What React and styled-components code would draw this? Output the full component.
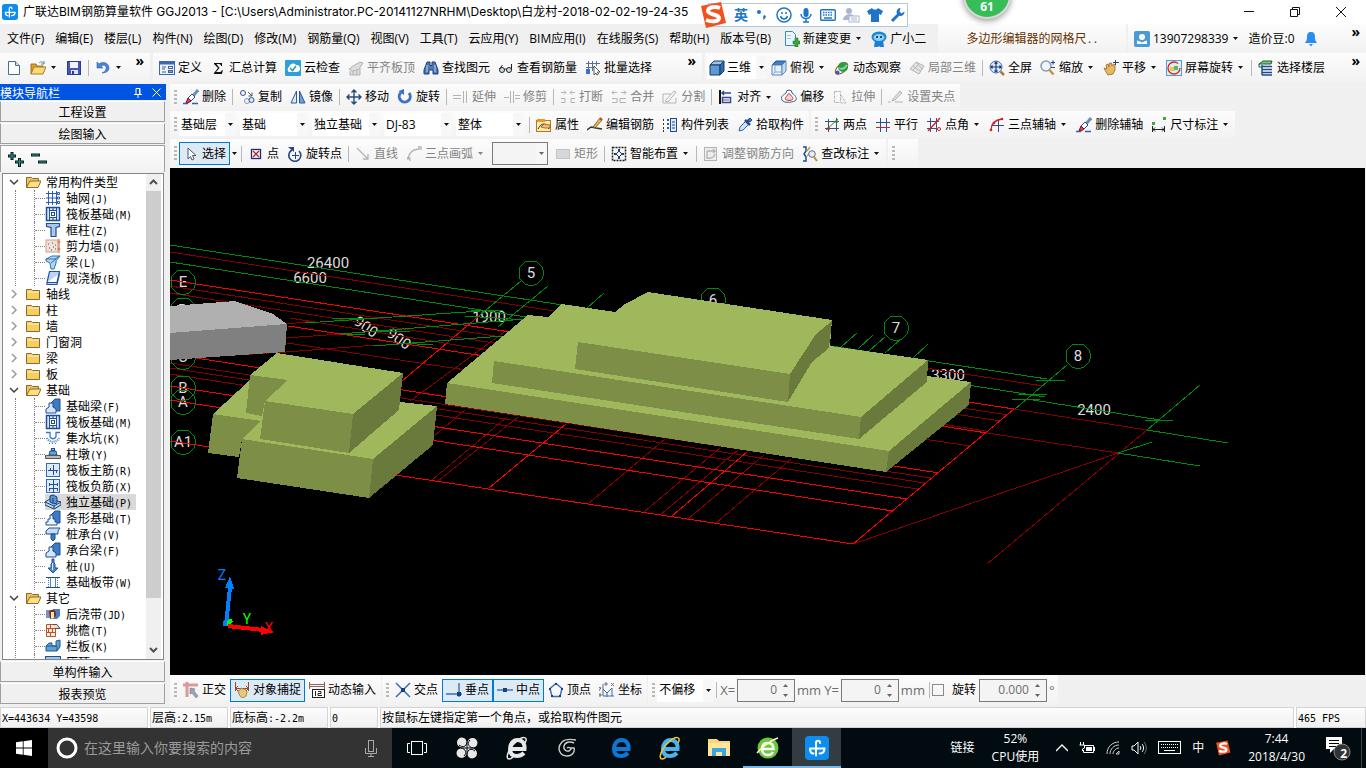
import React, {useState} from 'react';
import styled, {createGlobalStyle} from 'styled-components';

const BLUE = '#1f4e96';
const GREY = '#b4b4b4';

/* 16x16 drawings shared by the toolbars and the tree */
const glyphs = {
  newFile: <><path d="M2.500 1.500h7l4 4v9h-11z" fill="#fbfdff" stroke="#4a6a94"/><path d="M9.500 1.500v4h4" fill="#cfdff0" stroke="#4a6a94"/></>,
  open: <><path d="M1 14V4h5l1 2h6v3" fill="#d9a22c" stroke="#9a7420"/><path d="M1 14l3-7h12l-3 7z" fill="#ffd977" stroke="#a87c20"/><path d="M9 3c2-2 4-1 5 1m0-3v3h-3" fill="none" stroke="#5d8b9c"/></>,
  save: <><rect x="1.500" y="1.500" width="13" height="13" fill="#4956b8" stroke="#2d3a8f"/><rect x="4" y="2" width="8" height="6" fill="#eef2fb"/><rect x="5" y="10" width="7" height="4" fill="#dfe4f4"/><rect x="6" y="11" width="2" height="3" fill="#2d3a8f"/></>,
  undo: <><path d="M2 2v6h6L6 6c3-2 6 0 5 3-.5 2-2 3-4 4 4 0 7-2 7-5 0-5-6-7-10-4z" fill="#4a86d8" stroke="#2b5fae" strokeWidth=".6"/></>,
  define: <><rect x=".5" y="1.500" width="15" height="13" fill="#e9f1fc" stroke="#3c68b0"/><path d="M1 3h14" stroke="#3c68b0" strokeWidth="3"/><path d="M3 7h4M3 9h3M3 12h4" stroke="#44608c"/><rect x="9.500" y="6.500" width="4" height="2" fill="#fff" stroke="#44608c"/><rect x="9.500" y="10.500" width="4" height="2" fill="#7ea4dc" stroke="#44608c"/></>,
  sigma: <path d="M4 3h8v3h-1c0-1-.5-2-2-2H6.500L9.500 8l-3.500 4h4c1 0 1.500-1 2-2h.8L12 14H4v-1l4-5-4-4z" fill="#111"/>,
  cloud: <><rect width="16" height="16" rx="1" fill="#2f9fd8"/><path d="M4 12a3 3 0 0 1 0-5 4 4 0 0 1 7-2 3.500 3.500 0 0 1 1 7z" fill="#fff"/><path d="M5 8l2.500 2.500L11 6" fill="none" stroke="#2f8fc8" strokeWidth="1.500"/></>,
  flatTop: <><path d="M1 9l4-3 7-4 3 1-4 6-6 2zM2 11v4h10V8" fill="#dcdcdc" stroke={GREY}/><path d="M5 11v4M9 10v5" stroke={GREY}/></>,
  find: <><path d="M4 2h3v3l1 1 1-1V2h3l3 8v4h-5v-4H6v4H1v-4z" fill="#4d78b5" stroke="#1d3f78"/><path d="M4 5v7M12 5v7" stroke="#bcd2ee"/></>,
  glasses: <><circle cx="4" cy="10" r="2.500" fill="#cfe0ea" stroke="#222"/><circle cx="11" cy="10" r="2.500" fill="#cfe0ea" stroke="#222"/><path d="M6.500 9h2M1.500 9l3-4M13.500 9V4" fill="none" stroke="#222"/></>,
  batch: <><path d="M1 3.500h14M1 7.500h8M3.500 1v13M7.500 1v10M11.500 1v5" stroke="#5b6f8f" fill="none"/><rect x="1" y="9" width="4" height="5" fill="#3b6fd0"/><path d="M9 6v9l2-2 1 2 1.500-1-1-2H15z" fill="#fff" stroke="#333" strokeWidth=".8"/></>,
  cube: <><path d="M1 5l4-4h10l-4 4z" fill="#9cc4ea" stroke="#173a66"/><path d="M1 5h10v10H1z" fill="#5e9bd6" stroke="#173a66"/><path d="M11 5l4-4v10l-4 4z" fill="#2f6cab" stroke="#173a66"/></>,
  topView: <><path d="M1 5l4-4h10l-4 4z" fill="#3d7fd0" stroke="#27548e"/><path d="M1 5h10v10H1z" fill="#e6f1fb" stroke="#5c86b6"/><path d="M11 5l4-4v10l-4 4z" fill="#c6dcf1" stroke="#5c86b6"/><path d="M4 5v7h7M4 12l-3 3" fill="none" stroke="#84a8cf"/></>,
  orbit: <><ellipse cx="7.500" cy="8.500" rx="7.500" ry="4" transform="rotate(-40 7.500 8.500)" fill="none" stroke="#b04a20"/><circle cx="9" cy="7" r="5" fill="#2f9b4a"/><path d="M5 8c3 2 6 0 8-3" stroke="#8fdca0" fill="none" strokeWidth="1.500"/><circle cx="3.500" cy="12.500" r="2" fill="#2c66c4"/></>,
  partView: <><path d="M1 9l6-7 8 4-5 8z" fill="#e4e4e4" stroke={GREY}/><path d="M4 6l7 5M10 4l-6 6M8 3l5 6" stroke={GREY} fill="none"/></>,
  fit: <><circle cx="7" cy="7" r="6" fill="#d8e8f8" stroke="#4a6c9c"/><path d="M7 2v10M2 7h10M5.500 3.500L7 2l1.500 1.500M5.500 10.500L7 12l1.500-1.500M3.500 5.500L2 7l1.500 1.500M10.500 5.500L12 7l-1.500 1.500" fill="none" stroke="#1d3f88" strokeWidth="1.200"/><path d="M11.500 11.500l3.500 3.500" stroke="#b87830" strokeWidth="2.500"/></>,
  zoomTool: <><circle cx="6" cy="6" r="5" fill="#eef5fb" stroke="#8a9bb0" strokeWidth="1.500"/><path d="M9.500 10l4 4.500" stroke="#c89238" strokeWidth="2.500"/><path d="M11 2.500h4M13 .5v4M11 7.500h4" stroke="#1d4a90" strokeWidth="1.200"/></>,
  pan: <><path d="M1 8l3 1-1-4 2-1 1 3 .5-4h2L9 6l1.500-2 1.500 1v5l-2 4-5 1-2-3z" fill="#e9b862" stroke="#8d6b2c" strokeWidth=".8"/><path d="M10 2.500h6M12.500 0v5" stroke="#2b4a7c"/></>,
  screenRotate: <><rect x=".5" y=".5" width="15" height="15" fill="#d8eef8" stroke="#4c9fd0"/><circle cx="8" cy="8" r="6" fill="none" stroke="#d22" strokeWidth="1.300" strokeDasharray="32 6"/><rect x="4" y="7" width="5" height="4" fill="#f0c83c"/><rect x="8" y="6" width="4" height="4" fill="#5cb85c"/></>,
  floors: <><path d="M1 4l4-3h9l-1 3z" fill="#7cc47c" stroke="#205c38"/><path d="M4 5v10M4 6.500h10M4 9.500h10M4 12.500h10M4 15h10" stroke="#1c4a8c" strokeWidth="1.400"/><path d="M1 4v3h3" fill="none" stroke="#205c38"/></>,
  erase: <><path d="M15 1l-5 6" stroke="#6d8fb4" strokeWidth="3"/><path d="M9 5l3 3-4 4-3-3z" fill="#fff" stroke="#2d4b84"/><path d="M5 9l3 3-3 2H3z" fill="#e14a3c" stroke="#802"/><path d="M0 14.500h5M9 14.500h6" stroke="#2f62a8" strokeWidth="1.500"/></>,
  copy: <><circle cx="4" cy="4" r="2.500" fill="#eef4fb" stroke="#33568f"/><circle cx="8" cy="12" r="2.500" fill="#eef4fb" stroke="#8b98ac"/><circle cx="12.500" cy="11" r="2.500" fill="#dde8f4" stroke="#33568f"/><path d="M9 3l4 4M13 3.500V7h-3.500" stroke="#555" fill="none"/></>,
  mirror: <><path d="M6.500 2v12H1z" fill="#dfeaf8" stroke="#2c5aa0"/><path d="M9.500 2v12H15z" fill="#6f9bd8" stroke="#2c5aa0"/></>,
  move: <path d="M8 1v14M1 8h14M5.500 3.500L8 1l2.500 2.500M5.500 12.500L8 15l2.500-2.500M3.500 5.500L1 8l2.500 2.500M12.500 5.500L15 8l-2.500 2.500" fill="none" stroke="#24497c" strokeWidth="1.400"/>,
  rotate: <><path d="M4 3.500A5.500 5.500 0 1 0 12 4" fill="none" stroke="#3d72c8" strokeWidth="3"/><path d="M7 0v6L1.500 2z" fill="#3d72c8"/></>,
  extend: <path d="M0 6.500h8M0 9.500h8M10.500 2v12M13.500 2v12" fill="none" stroke={GREY}/>,
  trim: <path d="M0 8.500h5M11 6.500h5M11 9.500h5M6.500 2v12M9.500 2v12" fill="none" stroke={GREY}/>,
  breakIt: <path d="M1 3.500h5M10 3.500h5M4 1.500l2 2-2 2M12 1.500l-2 2 2 2M1 9.500h4v4H1M15 9.500h-4v4h4" fill="none" stroke={GREY}/>,
  merge: <path d="M1 3.500h5M10 3.500h5M3 1.500l-2 2 2 2M13 1.500l2 2-2 2M1 9.500h5v4H1M15 9.500H9v4h6" fill="none" stroke={GREY}/>,
  split: <path d="M1 5h8M1 5v9h13V9M3 12l9-10 2 1-8 10z" fill="none" stroke={GREY}/>,
  align: <><path d="M2 1v14" stroke="#111" strokeWidth="2"/><path d="M4 4h9M6 2L4 4l2 2" stroke="#2a4b9c" fill="none" strokeWidth="1.500"/><rect x="4.500" y="8.500" width="8" height="5" fill="#fff" stroke="#2a4b9c" strokeWidth="1.500"/><path d="M5 11h6" stroke="#b33"/></>,
  offset: <><path d="M5 4a3 3 0 0 1 6 0c3 2 5 5 4 7s-12 4-14 0 2-5 4-7z" fill="#fff" stroke="#345a94"/><path d="M6.500 6c1-2 2-2 3 0 2 2 3 3 2 4.500s-6 1-7 0S5 8 6.500 6z" fill="#f6d0cc" stroke="#c43c30"/></>,
  stretch: <path d="M2.500 2.500h6v11h-1M2.500 2.500v11h5M9 6l5 8H9" fill="none" stroke={GREY} strokeDasharray="3 1"/>,
  grips: <><path d="M0 13h3M7 13h8" stroke={GREY}/><path d="M5 10l7-8 2 2-7 7-3 1z" fill="#ddd" stroke={GREY}/></>,
  props: <><rect x=".5" y="3.500" width="14" height="11" fill="#ffe9b0" stroke="#b97812"/><path d="M1 2h8v3H1z" fill="#e89a28"/><path d="M2 12c3-5 5-6 8-4l3 4" fill="none" stroke="#333"/><path d="M5 10l3-3 6 1v3H9z" fill="#f2bd78" stroke="#7a4a14" strokeWidth=".7"/></>,
  editBar: <><path d="M0 13l4-3 5 1 6 1" stroke="#333" fill="none" strokeWidth="1.500"/><path d="M6 10l7-9 2 2-7 8z" fill="#e8c34c" stroke="#5c4210" strokeWidth=".8"/><path d="M13 1l2 2" stroke="#c33" strokeWidth="2"/></>,
  list: <><path d="M1 3h2M1 7h2M1 11h2M1 14h2" stroke="#333" strokeDasharray="1 1" strokeWidth="2"/><path d="M5 3h2M5 7h2M5 11h2" stroke="#2c5aa8" strokeWidth="2"/><rect x="8.500" y="1.500" width="6" height="13" fill="#dbe9f8" stroke="#234a86"/><path d="M10 5h3M10 8h3M10 11h3" stroke="#234a86"/></>,
  picker: <><path d="M2 14l1-4 6-6 3 3-6 6z" fill="#cfe4f6" stroke="#2f66a8"/><path d="M8 3l5 5M10 5l3-3" stroke="#1f4c8c" strokeWidth="2.500"/><path d="M11 3l2-2 2 2-2 2z" fill="#3f86d0" stroke="#1f4c8c"/></>,
  twoPoint: <><path d="M4.500 2v13M12.500 1v13M1 4.500h14M1 11.500h14" stroke="#39508c" fill="none"/><path d="M2 13L14 2" stroke="#2a8a2a"/><circle cx="4.500" cy="11.500" r="1.500" fill="#c22"/><circle cx="12.500" cy="4.500" r="1.500" fill="#2a8a2a"/></>,
  parallel: <><path d="M5.500 1v14M11.500 1v14M1 5.500h14" stroke="#2c4f94"/><path d="M1 10.500h14" stroke="#c22"/></>,
  pointAngle: <><path d="M4.500 1v14M10.500 1v14M1 4.500h12M1 11.500h10" stroke="#39508c"/><path d="M2 14L14 1" stroke="#c22" strokeWidth="1.300"/><circle cx="13" cy="12" r="1.500" fill="none" stroke="#c22"/></>,
  threeAxis: <><path d="M9.500 2v13M3 8.500h12" stroke="#2c4f94"/><path d="M2 13c0-7 4-10 11-11" fill="none" stroke="#c22" strokeWidth="1.300"/><circle cx="2" cy="13" r="1.300" fill="#c22"/><circle cx="13" cy="2" r="1.300" fill="#c22"/><circle cx="5" cy="6" r="1.300" fill="#c22"/></>,
  dimension: <><path d="M1.500 9v6M13.500 9v6M2 12.500h11M4 10.500l-2 2 2 2M11 10.500l2 2-2 2" fill="none" stroke="#222"/><path d="M1 5h3v3H1zM12 0h3v3h-3z" fill="#3aa84a"/></>,
  cursor: <path d="M5 2v11l2.500-2.500L9 14l2-1-1.500-3.500H13z" fill="#fff" stroke="#556" />,
  point: <><rect x="3.500" y="3.500" width="9" height="9" fill="#fff" stroke="#1a2a7a" strokeWidth="1.300"/><path d="M5 5l6 6M11 5l-6 6" stroke="#b22" strokeWidth="1.300"/></>,
  rotPoint: <><path d="M5 4a6 6 0 1 0 7 1" fill="none" stroke="#24497c" strokeWidth="1.600"/><path d="M8.500 6v7M5 9.500h7" stroke="#24497c"/><path d="M1 1h6v5z" fill="#24497c"/></>,
  line: <path d="M2 2l11 11M13 8v5H8" fill="none" stroke={GREY} strokeWidth="1.300"/>,
  arc: <path d="M2 14C2 8 6 3 14 3M1 12h3v3M12 1h3v3" fill="none" stroke={GREY} strokeWidth="1.300"/>,
  rect: <rect x="1.500" y="3.500" width="13" height="9" fill="#d8d8d8" stroke="#c4c4c4"/>,
  smart: <><rect x="1.500" y="1.500" width="13" height="13" fill="none" stroke="#222" strokeDasharray="2 1" strokeWidth="1.500"/><path d="M8 3v3M8 10v3M3 8h3M10 8h3" stroke="#1b3f86" strokeWidth="2"/><path d="M6 6h1v1H6zM9 9h1v1H9zM9 6h1v1H9zM6 9h1v1H6z" fill="#222"/></>,
  barDir: <><rect x="1.500" y="1.500" width="12" height="13" fill="#eee" stroke={GREY}/><path d="M4 5h8M4 5v7c4 1 7-1 8-4M10 3l2 2-2 2" fill="none" stroke={GREY} strokeWidth="1.400"/></>,
  checkMark: <><path d="M1 1h3v4l-2 3 2 3v4H1" fill="none" stroke="#1f4e96" strokeWidth="1.500"/><path d="M5 5l3-4M5 10l2-2" stroke="#c7a03a" strokeWidth="1.500"/><circle cx="10" cy="8" r="3.300" fill="#e6f0f8" stroke="#55708f"/><path d="M12 11l3 4" stroke="#c98a2c" strokeWidth="2"/></>,
  ortho: <><path d="M0 3h15M4 0v15" stroke="#d99a98" strokeWidth="3"/><path d="M7 6v6l2-1 4 5 2-2-4-5 1-2z" fill="#98a5b5" stroke="#6d7a8b" strokeWidth=".6"/></>,
  snap: <><path d="M1.500 0v9M14.500 0v9M1 6.500h14M4 4L1.500 6.500 4 9M12 4l2.500 2.500L12 9" stroke="#a5403a" fill="none"/><path d="M4 9l2-1 1-2 2 1 2 0 2 3-1 4c-2 2-5 2-6 0z" fill="#e7c77b" stroke="#a8853a"/></>,
  dynInput: <><path d="M.5 0v7M15.500 0v7M0 2.500h16M0 4.500h16" stroke="#8a6460"/><rect x="3.500" y="7.500" width="12" height="8" fill="#fff" stroke="#222"/><path d="M6.500 9v5M9 9.500h3v2H9v2h4" stroke="#222" fill="none"/></>,
  cross: <><path d="M1 1l14 14M15 1L1 15" stroke="#3a6db8" strokeWidth="1.500"/><rect x="6" y="6" width="4" height="4" fill="#173f88"/></>,
  perp: <><path d="M0 12h16M13 1v14" stroke="#3a6db8" strokeWidth="1.400"/><rect x="11" y="10" width="4" height="4" fill="#173f88"/></>,
  mid: <><path d="M0 8h16" stroke="#3a6db8" strokeWidth="1.400"/><rect x="6" y="6" width="4" height="4" fill="#173f88"/></>,
  vertex: <><path d="M8 1.500l6 5-2 8H4l-2-8z" fill="none" stroke="#3a6db8" strokeWidth="1.400"/><path d="M7 1h2v2H7zM1 6h2v2H1zM13 6h2v2h-2zM3 13h2v2H3zM11 13h2v2h-2z" fill="#173f88"/></>,
  coord: <><path d="M4 2v12h11M4 7l4 4 5-5M8 11v4M13 6v8" fill="none" stroke="#3a6db8"/><path d="M0 5l2 2M2 5l-2 4M12 1l3 3M15 1l-3 3M0 12h2v2H0zM6 1h2v2H6z" stroke="#555" fill="none" strokeWidth=".8"/></>,
  newChange: <><path d="M1.500 .500h7l3 3v11h-10z" fill="#eaf6fd" stroke="#3c8ab8"/><path d="M3 4.500h4M3 7.500h4" stroke="#9cc8e2"/><path d="M11 7h3v3h2v3h-2v3h-3v-3H9v-3h2z" fill="#3aa63a" stroke="#1d701d" strokeWidth=".5"/></>,
  mascot: <><ellipse cx="8" cy="6" rx="7.500" ry="5.500" fill="#1b86d8"/><path d="M4 9h8l1 7H9l-1-1-1 1H3z" fill="#1b7fd4"/><ellipse cx="8" cy="6.500" rx="5.500" ry="3.500" fill="#8ed0f8"/><circle cx="6" cy="6" r="1" fill="#124"/><circle cx="10" cy="6" r="1" fill="#124"/></>,
  user: <><rect width="16" height="16" rx="2" fill="#4a9ad4"/><circle cx="8" cy="6" r="3" fill="#fff"/><path d="M3 13V9.500l3 1 2 1 2-1 3-1V13z" fill="#fff"/></>,
  bell: <><path d="M8 1c3 0 4 2 4 5 0 4 1 4 2 6H2c1-2 2-2 2-6 0-3 1-5 4-5z" fill="#2b8cf0"/><path d="M6 13h4l-2 2.500z" fill="#2b8cf0"/></>,
  folder: <><path d="M1.500 13.500v-10h5l1 1h7v9z" fill="#f6cf62" stroke="#8a6a24"/><path d="M2 6h12" stroke="#fff2c0"/></>,
  folderOpen: <><path d="M1.500 13.500v-10h5l1 1h6v3" fill="#f0c454" stroke="#8a6a24"/><path d="M1.500 13.500L5 7h11l-3 6.500z" fill="#fce08c" stroke="#8a6a24"/></>,
  axisNet: <><path d="M3.500 1v14M7.500 1v14M1 3.500h11M1 8h11M1 12.500h11" stroke="#2c5fb4" fill="none"/><path d="M11.500 1v14" stroke="#2c5fb4"/><path d="M12.500 2.500h2v2h-2zM12.500 7h2v2h-2zM12.500 11.500h2v2h-2z" fill="#fff" stroke="#2c5fb4"/></>,
  raft: <><rect x="1.500" y="1.500" width="13" height="13" fill="#dbe8f6" stroke={BLUE} strokeWidth="1.500"/><rect x="4.500" y="4.500" width="7" height="7" fill="#fff" stroke={BLUE}/><path d="M6.500 6v4M9.500 6v4M6 6.500h4M6 9.500h4M4.500 2v2M8 2v2M11.500 2v2M4.500 12v2M8 12v2M11.500 12v2" stroke={BLUE}/></>,
  column: <path d="M1.500 1.500h13v3l-3.500 1v9H6v-9l-4.500-1z" fill="#a9c8ec" stroke={BLUE} strokeWidth="1.200"/>,
  shearWall: <><rect x="1" y="2" width="12" height="12" fill="#efe2da" stroke="#d8a080"/><path d="M3 6h1M7 5h1M10 7h1M4 10h1M8 9h1M6 12h1M10 11h1" stroke="#555"/><path d="M14 1v14M12.500 4h3M12.500 11h3" stroke="#c8642c"/></>,
  beam: <><path d="M1 5l6-3h8l-4 5v2l-2 6H6L5 9 1 7z" fill="#b5d6f2" stroke="#2a72b8"/><path d="M1 5h9l5-3M6 9l5-4" fill="none" stroke="#2a72b8"/></>,
  slab: <path d="M4.500 1.500h10L12 12.500H2z M2 12.500v2h10l2.500-11" fill="#b9d4f4" stroke="#22569e" strokeWidth="1.200"/>,
  footBeam: <><path d="M6 5l4-4h5v12h-4z" fill="#3d7cc4" stroke={BLUE}/><path d="M1 15v-4l3-2V5h4v4l3 2v4z" fill="#d6e6f8" stroke={BLUE}/></>,
  pit: <><path d="M1 2.500h4v4c1 3 5 3 6 0v-4h4" fill="none" stroke="#3a76c0" strokeWidth="1.300"/><path d="M2 8c2 5 10 5 12 0" fill="none" stroke="#3a76c0" strokeDasharray="1 1" strokeWidth="2"/><path d="M4 13.500h8" stroke="#3a76c0" strokeDasharray="1 2"/></>,
  pier: <><path d="M4 9l1-4h6l1 4z" fill="#6fa0dc" stroke={BLUE}/><rect x="6.500" y="2.500" width="3" height="2" fill="#8db4e2" stroke={BLUE}/><path d="M.5 9.500h15v3H.5z" fill="#bcbcbc" stroke="#555"/></>,
  mainBar: <><rect x="1.500" y="1.500" width="13" height="13" fill="#dceafa" stroke="#3468b8"/><path d="M8.500 3v10M3 8.500h10M5.500 6v3M11.500 8v3" stroke={BLUE}/></>,
  negBar: <><rect x="1.500" y="1.500" width="13" height="13" fill="#dceafa" stroke="#3468b8"/><path d="M8.500 1v14M4 6.500h9M4 10.500h9M4.500 5v3M12.500 5v3M4.500 10v3M12.500 10v3" stroke={BLUE}/></>,
  isoFoot: <><path d="M0 8l5-3 11 3v3l-7 4-9-4z" fill="#bcd6f0" stroke="#14406f"/><path d="M5 2l3-1 4 2v6l-3 1-4-2z" fill="#5b94cf" stroke="#14406f"/><path d="M0 8l9 4v3M9 12l7-4M8 4v5" fill="none" stroke="#14406f"/></>,
  stripFoot: <><path d="M6 5l4-4h5v12h-4z" fill="#3d7cc4" stroke={BLUE}/><path d="M1 15v-3h2V9h2V5h3v4h2v3h2v3z" fill="#eaf2fb" stroke={BLUE}/></>,
  pileCap: <><path d="M1 5l3-3h11l-2 3v3H1z" fill="#c8def4" stroke={BLUE}/><path d="M6 8h4v5l-2 2-2-2z" fill="#3d7cc4" stroke={BLUE}/></>,
  pile: <><path d="M7 1h2v4l1 1v4h3l-5 5-5-5h3V6l1-1z" fill="#4d8ad0" stroke={BLUE}/><path d="M7.500 5v7" stroke="#dcecff"/></>,
  band: <><path d="M1 3.500h14M1 13.500h14" stroke={BLUE}/><path d="M3.500 4v9M12.500 4v9" stroke="#4c84cc" strokeDasharray="1 1"/><path d="M5.500 4v9M10.500 4v9" stroke="#4c84cc"/></>,
  postCast: <><path d="M1 4h6v8H1z" fill="#7d94b8"/><path d="M8 3h7v7l-3 3H8z" fill="#4f7ec0"/><path d="M4 5c5-3 7 0 7 3s-2 4-6 5z" fill="#733414"/><path d="M6 6h3v6H6z" fill="#f2e0c8"/></>,
  eave: <><path d="M1.500 2.500h9v12h-9z" fill="#fbe8d8" stroke="#b5552a"/><path d="M2 6.500h8M2 10.500h8M5.500 3v3M3.500 7v3M7.500 7v3M5.500 11v3" stroke="#b5552a"/><path d="M8 2.500h4l3 4h-5" fill="#ddd" stroke="#6b4a3a"/></>,
  rail: <><path d="M1 8l3-3h3v3h4V3l4-1v7l-3 4H1z" fill="#5f9fd6" stroke="#1f5a94"/><path d="M1 8h11v5" fill="none" stroke="#1f5a94"/></>,
  coping: <rect x=".5" y="2.500" width="15" height="10" fill="#9cc4ec" stroke={BLUE}/>,
};

const Icon = ({name, size = 16}) => (
  <svg width={size} height={size} viewBox="0 0 16 16" aria-hidden="true">{glyphs[name]}</svg>
);

const Caret = ({color = '#111'}) => (
  <svg width="5" height="3" viewBox="0 0 5 3" aria-hidden="true"><path d="M0 0h5L2.500 3z" fill={color}/></svg>
);

/* latin runs of the bitmap font sit in a half-width cell */
const Mixed = ({children}) => children.split(/([\x20-\x7e]+)/).filter(Boolean).map((run, i) => (
  /^[\x20-\x7e]/.test(run) ? <Half key={i}>{run}</Half> : <span key={i}>{run}</span>
));

const Tools = ({items}) => items.map((item, i) => {
  if (item === '|') return <Divider key={i} />;
  const [icon, label, opts = {}] = item;
  return (
    <Tool key={i} type="button" $on={opts.on} disabled={opts.off} aria-label={label || icon}>
      <Icon name={icon} />
      {label && <span>{label}</span>}
      {opts.more && <Drop><Caret color={opts.off ? '#888' : '#111'} /></Drop>}
    </Tool>
  );
});

const Combo = ({label, value, icon, width}) => (
  <ComboBox $width={width}>
    {icon && <Icon name={icon} />}
    <select aria-label={label}><option>{value}</option></select>
    <ComboArrow><Caret /></ComboArrow>
  </ComboBox>
);

const Spin = ({label, value, width}) => (
  <SpinBox $width={width}>
    <input type="text" aria-label={label} defaultValue={value} disabled />
    <SpinArrows>
      <svg width="5" height="3" viewBox="0 0 5 3"><path d="M0 3h5L2.500 0z" fill="#666"/></svg>
      <Caret color="#666" />
    </SpinArrows>
  </SpinBox>
);

const menus = ['文件(F)', '编辑(E)', '楼层(L)', '构件(N)', '绘图(D)', '修改(M)', '钢筋量(Q)', '视图(V)',
  '工具(T)', '云应用(Y)', 'BIM应用(I)', '在线服务(S)', '帮助(H)', '版本号(B)'];

const mainTools = [['define', '定义'], ['sigma', '汇总计算'], ['cloud', '云检查'], ['flatTop', '平齐板顶', {off: true}],
  ['find', '查找图元'], ['glasses', '查看钢筋量'], ['batch', '批量选择']];

const viewTools = [['topView', '俯视', {more: true}], ['orbit', '动态观察'], ['partView', '局部三维', {off: true}], '|',
  ['fit', '全屏'], ['zoomTool', '缩放', {more: true}], ['pan', '平移', {more: true}],
  ['screenRotate', '屏幕旋转', {more: true}], '|', ['floors', '选择楼层']];

const editTools = [['erase', '删除'], '|', ['copy', '复制'], ['mirror', '镜像'], '|', ['move', '移动'], ['rotate', '旋转'], '|',
  ['extend', '延伸', {off: true}], ['trim', '修剪', {off: true}], '|', ['breakIt', '打断', {off: true}],
  ['merge', '合并', {off: true}], ['split', '分割', {off: true}], '|', ['align', '对齐', {more: true}], ['offset', '偏移'],
  ['stretch', '拉伸', {off: true}], '|', ['grips', '设置夹点', {off: true}]];

const partTools = ['|', ['props', '属性'], ['editBar', '编辑钢筋'], ['list', '构件列表'], ['picker', '拾取构件']];

const axisTools = [['twoPoint', '两点'], ['parallel', '平行'], ['pointAngle', '点角', {more: true}],
  ['threeAxis', '三点辅轴', {more: true}], ['erase', '删除辅轴'], ['dimension', '尺寸标注', {more: true}]];

const drawTools = ['|', ['point', '点'], ['rotPoint', '旋转点'], '|', ['line', '直线', {off: true}],
  ['arc', '三点画弧', {off: true, more: true}]];

const layoutTools = [['rect', '矩形', {off: true}], '|', ['smart', '智能布置', {more: true}], '|',
  ['barDir', '调整钢筋方向', {off: true}], ['checkMark', '查改标注', {more: true}]];

const tree = [
  {name: '常用构件类型', open: true, kids: [['axisNet', '轴网(J)'], ['raft', '筏板基础(M)'], ['column', '框柱(Z)'],
    ['shearWall', '剪力墙(Q)'], ['beam', '梁(L)'], ['slab', '现浇板(B)']]},
  {name: '轴线'}, {name: '柱'}, {name: '墙'}, {name: '门窗洞'}, {name: '梁'}, {name: '板'},
  {name: '基础', open: true, kids: [['footBeam', '基础梁(F)'], ['raft', '筏板基础(M)'], ['pit', '集水坑(K)'],
    ['pier', '柱墩(Y)'], ['mainBar', '筏板主筋(R)'], ['negBar', '筏板负筋(X)'], ['isoFoot', '独立基础(P)'],
    ['stripFoot', '条形基础(T)'], ['pileCap', '桩承台(V)'], ['footBeam', '承台梁(F)'], ['pile', '桩(U)'],
    ['band', '基础板带(W)']]},
  {name: '其它', open: true, kids: [['postCast', '后浇带(JD)'], ['eave', '挑檐(T)'], ['rail', '栏板(K)'], ['coping', '压顶(YD)']]},
];

/* model space: x1 y1 x2 y2 */
const darkLines = [
  [170, 252, 1043, 386], [170, 286, 1008, 415], [170, 293, 1000, 421], [290, 318, 985, 431], [287, 343, 970, 446],
  [286, 324, 315, 321], [286, 338, 340, 334], [286, 352, 376, 345], [170, 359, 286, 352],
  [170, 363, 931, 478], [170, 368, 925, 483], [170, 374, 917, 489],
  [1014, 409, 1147, 430], [987, 433, 1118, 453], [853, 544, 1118, 453], [987, 564, 1147, 430],
  [507, 330, 410, 401], [465, 410, 402, 463], [507, 417, 432, 480], [518, 417, 438, 481],
  [665, 439, 588, 504], [720, 448, 644, 512], [738, 450, 660, 515], [764, 455, 688, 519], [791, 459, 716, 523],
];
const redLines = [
  [170, 280, 1014, 409], [288, 326, 987, 433], [170, 354, 939, 473], [170, 386, 907, 499], [170, 400, 893, 511],
  [170, 441, 853, 544], [853, 544, 1014, 409], [480, 315, 402, 381], [566, 424, 489, 488], [747, 452, 672, 516],
];
const greenLines = [
  [170, 245, 1047, 379], [170, 262, 1045, 397], [1033, 400, 1160, 420], [1147, 430, 1228, 443], [1118, 453, 1200, 466],
  [1118, 453, 1152, 442], [1147, 430, 1200, 385], [1067, 365, 1015, 409], [1036, 380, 1065, 380], [1018, 394, 1047, 394],
  [1012, 399, 1040, 399], [1145, 420, 1173, 420], [305, 323, 495, 310], [340, 334, 525, 319], [373, 346, 503, 336],
  [521, 281, 480, 315], [548, 286, 498, 327], [471, 310, 503, 311], [465, 316, 526, 320], [331, 318, 377, 319],
  [375, 331, 410, 332], [400, 343, 433, 345], [345, 334, 365, 334],
  [604, 293, 587, 308], [857, 333, 841, 347], [873, 335, 858, 349], [885, 337, 869, 351], [901, 339, 885, 353], [928, 344, 913, 358],
];
const axisMarks = [['E', 183, 282], ['D', 183, 310], ['C', 183, 357], ['B', 183, 388], ['A', 183, 402], ['A1', 183, 442],
  ['5', 531, 273], ['6', 713, 300], ['7', 896, 328], ['8', 1078, 356]];

const ring = (cx, cy) => Array.from({length: 12}, (_, i) => {
  const a = i * Math.PI / 6;
  return `${Math.round(cx + 12.5 * Math.sin(a))},${Math.round(cy + 12.5 * Math.cos(a))}`;
}).join(' ');

const Lines = ({rows, color}) => (
  <g stroke={color} shapeRendering="crispEdges">
    {rows.map(([x1, y1, x2, y2], i) => <line key={i} x1={x1} y1={y1} x2={x2} y2={y2} />)}
  </g>
);

const Scene = () => (
  <SceneSvg viewBox="170 168 1195 507" role="img" aria-label="三维模型">
    <g fill="#dcdcdc" fontSize="15" textAnchor="middle">
      <text x="328" y="268">26400</text>
      <text x="310" y="283">6600</text>
      <text x="489" y="322">1900</text>
      <text transform="translate(363 331) rotate(35)">900</text>
      <text transform="translate(396 343) rotate(35)">900</text>
      <text x="948" y="380">3300</text>
      <text x="1094" y="415">2400</text>
      {axisMarks.map(([t, x, y]) => <text key={t} x={x} y={y + 5}>{t}</text>)}
    </g>
    <Lines rows={darkLines} color="#870000" />
    <Lines rows={redLines} color="#ff0000" />
    <g fill="none" stroke="#008a10" shapeRendering="crispEdges">
      {axisMarks.map(([t, x, y]) => <polygon key={t} points={ring(x, y)} />)}
    </g>
    <Lines rows={greenLines} color="#008a10" />
    <g shapeRendering="crispEdges">
      <path d="M170 306L235 301 273 314 287 324 170 333z" fill="#b0b0b0"/>
      <path d="M170 333L287 324 285 352 170 360z" fill="#808080"/>
      <g fill="#a0b85c">
        <path d="M447 383L528 315 548 317 562 304 615 312 625 304 648 292 832 320 830 346 928 360 927 376 971 382 889 451z"/>
        <path d="M213 414L250 380 400 402 437 406 373 459 242 439 261 421z"/>
        <path d="M250 375L277 353 403 373 353 414 265 401 288 380z"/>
      </g>
      <g fill="#7d8f47">
        <path d="M447 383L889 451 886 472 445 404z"/>
        <path d="M494 361L861 417 859 439 492 383z"/>
        <path d="M578 342L790 374 788 402 575 369z"/>
        <path d="M213 414L261 421 242 439 239 457 208 453z"/>
        <path d="M242 439L373 459 369 498 237 478z"/>
        <path d="M250 375L288 380 265 401 262 416 246 413z"/>
        <path d="M265 401L353 414 349 453 260 439z"/>
      </g>
      <g fill="#6a7a3c">
        <path d="M889 451L971 382 969 405 886 472z"/>
        <path d="M861 417L928 360 927 382 859 439z"/>
        <path d="M832 321L829 348 812 362 788 402 790 374 816 334z"/>
        <path d="M373 459L437 406 433 445 369 498z"/>
        <path d="M353 414L403 373 399 410 349 453z"/>
      </g>
      <path d="M226 625L230 587" stroke="#0080ff" strokeWidth="4"/>
      <path d="M230 576L234 589 225 588z" fill="#0080ff"/>
      <path d="M226 625L232 620" stroke="#00ff00" strokeWidth="4"/>
      <path d="M228 626L263 630" stroke="#ff0000" strokeWidth="4"/>
      <path d="M261 626L274 632 261 635z" fill="#ff0000"/>
      <path d="M223 621h4v5h-4z" fill="#0080ff"/>
    </g>
    <g fontSize="14" textAnchor="middle">
      <text x="222" y="580" fill="#0080ff">Z</text>
      <text x="247" y="624" fill="#00ff00">Y</text>
      <text x="269" y="633" fill="#ff0000">X</text>
    </g>
  </SceneSvg>
);

const App = () => {
  const [picked, setPicked] = useState('独立基础(P)');

  return (
    <Desktop>
      <GlobalStyle />
      <TitleBar>
        <BrandMark size={16} />
        <Title>广联达BIM钢筋算量软件 GGJ2013 - [C:\Users\Administrator.PC-20141127NRHM\Desktop\白龙村-2018-02-02-19-24-35</Title>
        <WinButtons>
          <button type="button" aria-label="最小化"><svg width="12" height="12"><path d="M1 5.500h10" stroke="#111"/></svg></button>
          <button type="button" aria-label="还原"><svg width="12" height="12" fill="none" stroke="#111"><path d="M1.500 3.500h7v7h-7zM3.500 3V1.500h7v7H9"/></svg></button>
          <button type="button" aria-label="关闭"><svg width="12" height="12"><path d="M1 1l10 10M11 1L1 11" stroke="#111"/></svg></button>
        </WinButtons>
      </TitleBar>

      <ImeBar>
        <SogouMark size={28} />
        <b>英</b>
        <svg width="14" height="16" viewBox="0 0 14 16"><circle cx="4" cy="5" r="2" fill="#1f74c8"/><path d="M9 8c3 0 2 4-1 5 1-2 0-2 0-3z" fill="#1f74c8"/></svg>
        <svg width="16" height="16" viewBox="0 0 16 16" fill="none" stroke="#1f74c8" strokeWidth="1.500"><circle cx="8" cy="8" r="7"/><path d="M4.500 9c1 4 6 4 7 0M6 5v2M10 5v2"/></svg>
        <svg width="14" height="16" viewBox="0 0 14 16"><rect x="4.500" y="1" width="5" height="9" rx="2.500" fill="#1f74c8"/><path d="M2 7c0 6 10 6 10 0M7 12v3M4 15h6" fill="none" stroke="#1f74c8" strokeWidth="1.500"/></svg>
        <svg width="16" height="12" viewBox="0 0 16 12"><rect x=".7" y=".7" width="14.600" height="10.600" rx="1" fill="none" stroke="#1f74c8" strokeWidth="1.400"/><path d="M3 3.500h10M3 6h10" stroke="#1f74c8" strokeDasharray="1.500 1" strokeWidth="1.500"/><path d="M4 9h8" stroke="#1f74c8" strokeWidth="1.500"/></svg>
        <svg width="17" height="16" viewBox="0 0 17 16"><circle cx="6" cy="4" r="3" fill="#a9b6cc"/><path d="M0 13c0-6 9-7 11-4v4z" fill="#a9b6cc"/><rect x="6" y="9" width="10" height="6" fill="#fff" stroke="#a9b6cc"/><path d="M8 11h6M8 13h6" stroke="#a9b6cc"/></svg>
        <svg width="16" height="16" viewBox="0 0 16 16"><path d="M5 1c1 2 5 2 6 0l5 3-2 4-2-1v8H4V7L2 8 0 4z" fill="#1f74c8"/></svg>
        <svg width="16" height="16" viewBox="0 0 16 16"><path d="M2 14l7-7" stroke="#1f74c8" strokeWidth="3"/><path d="M14.500 4.500A4 4 0 1 1 10.500 1L9.500 4.500l2 2z" fill="#1f74c8"/></svg>
      </ImeBar>
      <SpeedBall>61</SpeedBall>

      <MenuRow>
        <Strip $basis={936} as="nav">
          <Menus>
            {menus.map((m) => <MenuItem key={m} type="button">{m}</MenuItem>)}
          </Menus>
          <Tools items={[['newChange', '新建变更', {more: true}], ['mascot', '广小二']]} />
        </Strip>
        <Strip $basis={188} $lift><Notice href="#tip"><Mixed>多边形编辑器的网格尺..</Mixed></Notice></Strip>
        <Strip $grow $lift>
          <Tools items={[['user', '13907298339', {more: true}]]} />
          <Beans>造价豆:0</Beans>
          <Tools items={[['bell', '']]} />
          <More>»</More>
        </Strip>
      </MenuRow>

      <ToolRow>
        <Strip $basis={150} $lift>
          <Tools items={[['newFile', ''], ['open', '', {more: true}], ['save', ''], '|', ['undo', '', {more: true}]]} />
          <More>»</More>
        </Strip>
        <Strip $basis={549} $lift>
          <Tools items={mainTools} />
          <More>»</More>
        </Strip>
        <Strip $grow $lift>
          <Combo label="视图" value="三维" icon="cube" width={60} />
          <Tools items={viewTools} />
          <More>»</More>
        </Strip>
      </ToolRow>

      <Body>
        <Side>
          <SideHead>
            <span>模块导航栏</span>
            <svg width="30" height="12" fill="none" stroke="#fff"><path d="M3 8.500h8M5 8V2.500h4V8M8.500 3v5M7 9v3M21.500 2.500l8 8M29.500 2.500l-8 8"/></svg>
          </SideHead>
          <SideButton type="button">工程设置</SideButton>
          <SideButton type="button">绘图输入</SideButton>
          <TreeTools>
            <svg width="40" height="16" fill="none"><path d="M0 5h8M4 1v8M7 11h9M11.500 7v9M23 4h9M30 11h9" stroke="#0b1f1f" strokeWidth="3"/><path d="M1 5h6M4 2v6M8 11h7M11.500 8v7M24 4h7M31 11h7" stroke="#1f9c8c"/></svg>
          </TreeTools>
          <TreeBox>
            <TreeList>
              {tree.map((node) => (
                <li key={node.name}>
                  <Branch>
                    <svg width="12" height="10" viewBox="0 0 12 10" fill="none" stroke={node.open ? '#404040' : '#9a9a9a'} strokeWidth="1.500">
                      <path d={node.open ? 'M2 3l4 4 4-4' : 'M4 1l4 4-4 4'} />
                    </svg>
                    <Icon name={node.open ? 'folderOpen' : 'folder'} />
                    <span>{node.name}</span>
                  </Branch>
                  {node.kids && (
                    <Kids>
                      {node.kids.map(([icon, label]) => (
                        <li key={label}>
                          <Leaf type="button" $on={picked === label} onClick={() => setPicked(label)}>
                            <Icon name={icon} />
                            <span><Mixed>{label}</Mixed></span>
                          </Leaf>
                        </li>
                      ))}
                    </Kids>
                  )}
                </li>
              ))}
            </TreeList>
            <ScrollTrack>
              <svg width="15" height="17" fill="none" stroke="#505050" strokeWidth="2"><path d="M4 10l3.500-3.500L11 10"/></svg>
              <ScrollThumb />
              <svg width="15" height="17" fill="none" stroke="#505050" strokeWidth="2"><path d="M4 6l3.500 3.500L11 6"/></svg>
            </ScrollTrack>
          </TreeBox>
          <SideButton type="button">单构件输入</SideButton>
          <SideButton type="button">报表预览</SideButton>
        </Side>

        <Work>
          <Bars>
            <BarRow><Strip $lift><Grip /><Tools items={editTools} /></Strip></BarRow>
            <BarRow>
              <Strip $lift>
                <Grip />
                <Combos>
                  <Combo label="楼层" value="基础层" width={57} />
                  <Combo label="构件类别" value="基础" width={68} />
                  <Combo label="构件类型" value="独立基础" width={68} />
                  <Combo label="构件" value="DJ-83" width={68} />
                  <Combo label="范围" value="整体" width={68} />
                </Combos>
                <Tools items={partTools} />
              </Strip>
              <Strip $lift><Grip /><Tools items={axisTools} /></Strip>
            </BarRow>
            <BarRow>
              <Strip $lift>
                <Grip />
                <Tools items={[['cursor', '选择', {on: true}]]} />
                <Drop><Caret /></Drop>
                <Tools items={drawTools} />
                <SlimSelect><select aria-label="画法" disabled><option> </option></select><ComboArrow><Caret color="#666" /></ComboArrow></SlimSelect>
                <Tools items={layoutTools} />
              </Strip>
              <Strip $basis={30} $lift><Grip /></Strip>
            </BarRow>
          </Bars>
          <Viewport><Scene /></Viewport>
          <SnapRow>
            <Strip $lift>
              <Grip />
              <Tools items={[['ortho', '正交'], ['snap', '对象捕捉', {on: true}], ['dynInput', '动态输入']]} />
            </Strip>
            <Strip $lift>
              <Grip />
              <Tools items={[['cross', '交点'], ['perp', '垂点', {on: true}], ['mid', '中点', {on: true}], ['vertex', '顶点'], ['coord', '坐标']]} />
            </Strip>
            <Strip $lift>
              <Grip />
              <Combo label="偏移方式" value="不偏移" width={57} />
              <Divider />
              <Field>X=<Spin label="X" value="0" width={58} />mm</Field>
              <Field>Y=<Spin label="Y" value="0" width={58} />mm</Field>
              <Divider />
              <Turn><input type="checkbox" /><span>旋转</span></Turn>
              <Field><Spin label="角度" value="0.000" width={68} />°</Field>
            </Strip>
          </SnapRow>
        </Work>
      </Body>

      <StatusBar>
        <div><Mixed>X=443634 Y=43598</Mixed></div>
        <div><Mixed>层高:2.15m</Mixed></div>
        <div><Mixed>底标高:-2.2m</Mixed></div>
        <div><Mixed>0</Mixed></div>
        <div><Mixed>按鼠标左键指定第一个角点，或拾取构件图元</Mixed></div>
        <div><Mixed>465 FPS</Mixed></div>
      </StatusBar>

      <TaskBar>
        <Start type="button" aria-label="开始">
          <svg width="16" height="16" viewBox="0 0 16 16" fill="#fff"><path d="M0 2.300l6.800-1V7.600H0zM7.600 1.200L16 0v7.600H7.600zM0 8.400h6.800v6.300l-6.800-1zM7.600 8.400H16V16l-8.400-1.200z"/></svg>
        </Start>
        <Search>
          <svg width="22" height="22" fill="none" stroke="#fff" strokeWidth="3"><circle cx="11" cy="11" r="9"/></svg>
          <input type="text" aria-label="搜索" placeholder="在这里输入你要搜索的内容" />
          <svg width="12" height="18" fill="none" stroke="#aaa"><rect x="3.500" y="1.500" width="5" height="11"/><path d="M.5 9v5.500h11V9M6 15v3M3 17.500h6"/></svg>
        </Search>
        <Apps $cell={50}>
          <button type="button" aria-label="任务视图"><svg width="22" height="16" fill="none" stroke="#fff"><rect x="5.500" y="1.500" width="11" height="13"/><path d="M4 3.500H1.500v9H4M18 3.500h2.500v9H18"/></svg></button>
          <button type="button" aria-label="应用"><svg width="22" height="22" viewBox="0 0 22 22" fill="#e8e8e8"><path d="M10.500 10.500H6A5 5 0 0 1 1 5.500 5 5 0 0 1 6 0.500 5 5 0 0 1 10.500 5zM11.500 10.500V6A5 5 0 0 1 16.500 1 5 5 0 0 1 21.500 6 5 5 0 0 1 17 10.500zM11.500 11.500H16A5 5 0 0 1 21 16.500 5 5 0 0 1 16 21.500 5 5 0 0 1 11.500 17zM10.500 11.500V16A5 5 0 0 1 5.500 21 5 5 0 0 1 .5 16 5 5 0 0 1 5 11.500z"/><path d="M3 8c4 3 7 2 8-3M14 3c-3 3-2 7 3 8M19 14c-4-3-7-2-8 3M8 19c3-3 2-7-3-8" stroke="#020a0e" fill="none"/></svg></button>
          <button type="button" aria-label="浏览器"><EdgeMark color="#e8e8e8" halo="#e8e8e8" /></button>
          <button type="button" aria-label="旋风"><svg width="20" height="20" viewBox="0 0 20 20" fill="none" stroke="#ccc" strokeWidth="1.400"><path d="M19 2c-5-1-11-1-14 2-6 6-2 14 5 14 6 0 8-5 7-8h-4M17 5c-4-2-9-1-10 3-1 5 5 7 7 3-1-2-3-2-4-1"/></svg></button>
        </Apps>
        <Apps $cell={49}>
          <button type="button" aria-label="Edge"><EdgeMark color="#0a78d7" /></button>
          <button type="button" aria-label="Internet Explorer"><EdgeMark color="#4ab4ec" halo="#f3c63c" /></button>
          <button type="button" aria-label="文件资源管理器"><svg width="22" height="20" viewBox="0 0 22 20"><path d="M0 1h9l2 2h11v15H0z" fill="#f8d775"/><path d="M0 5h22v13H0z" fill="#ffe69a"/><path d="M4 18v-8h14v8h-4v-4H8v4z" fill="#3aa5e0"/></svg></button>
          <AppOpen type="button" aria-label="360浏览器"><GreenMark /></AppOpen>
          <AppOpen type="button" aria-label="GGJ2013" $active><BrandMark size={24} /></AppOpen>
        </Apps>
        <Tray>
          <span>链接</span>
          <Stack>52%<br />CPU使用</Stack>
          <svg width="12" height="12" fill="none" stroke="#fff" strokeWidth="1.300"><path d="M0 9l6-6 6 6"/></svg>
          <svg width="16" height="14" fill="none" stroke="#fff"><path d="M5 4.500h9.500v7H4.500V9M1.500 1v3M4.500 1v3M.5 4h5v3l-2 1v2"/><path d="M7 6h6v4H7zM15 6h1v4h-1z" fill="#fff" stroke="none"/></svg>
          <svg width="14" height="14" fill="none" stroke="#ccc"><path d="M1 13C1 6 6 1 13 1M4 13c0-5 4-9 9-9M7 13c0-3 3-6 6-6M10 13l3-3v3z"/></svg>
          <svg width="16" height="14" fill="none" stroke="#fff"><path d="M1 5h2l4-4v12L3 9H1zM9 5c1 1 1 3 0 4M11 3c2 2 2 6 0 8"/><path d="M13 1c3 3 3 9 0 12" stroke="#777"/></svg>
          <svg width="23" height="14" fill="none" stroke="#fff"><rect x=".5" y=".5" width="22" height="12"/><path d="M3 3.500h17M3 6.500h17" strokeDasharray="1 1"/><path d="M6 9.500h11"/></svg>
          <span>中</span>
          <SogouMark size={16} />
          <Stack>7:44<br />2018/4/30</Stack>
          <Bell type="button" aria-label="通知">
            <svg width="26" height="26" viewBox="0 0 26 26"><path d="M1 2h16v12H9l-4 4v-4H1z" fill="#fff"/><path d="M4 5.500h10M4 8.500h10M4 11.500h7" stroke="#000"/><circle cx="17" cy="17" r="8" fill="#333" stroke="#888"/></svg>
            <b>2</b>
          </Bell>
        </Tray>
      </TaskBar>
    </Desktop>
  );
};

const BrandMark = ({size}) => (
  <svg width={size} height={size} viewBox="0 0 24 24"><rect width="24" height="24" rx="4" fill="#0d8df0"/><path d="M15 7c0-3-4-3-4 0v12.500M5 12.500h14.500c0 3-2 5-5 5M5 12.500c0 3 1 5 3.500 5" fill="none" stroke="#fff" strokeWidth="2" strokeLinecap="round"/></svg>
);

const SogouMark = ({size}) => (
  <svg width={size} height={size} viewBox="0 0 28 28"><path d="M2 5L22 1l5 21-20 5z" fill="#f4501e"/><path d="M21 7c-5-2-12-1-12 3s11 3 11 7-8 4-13 2" fill="none" stroke="#fff" strokeWidth="4"/></svg>
);

const EdgeMark = ({color, halo}) => (
  <svg width="24" height="24" viewBox="0 0 24 24" fill="none"><path d="M6 13h13.500C20 7 17 4 12.500 4S5 8 5 13s3 7 7 7c3 0 5-1 7-3" stroke={color} strokeWidth="4"/>{halo && <path d="M20 7c4-7-3-7-9-1C3 13 0 23 4 23c2 0 3-1 4-2" stroke={halo} strokeWidth="1.500"/>}</svg>
);

const GreenMark = () => (
  <svg width="24" height="24" viewBox="0 0 24 24" fill="none"><circle cx="12" cy="12" r="10.500" fill="#68c93a"/><path d="M7 13h10.500c0-4-2-6-5.500-6s-6 2-6 6 3 6 6 6c2 0 4-1 5-3" stroke="#fff" strokeWidth="2.500"/><path d="M1 17C5 12 15 4 22 2" stroke="#fff7c0" strokeWidth="1.500"/></svg>
);

const GlobalStyle = createGlobalStyle`
  * {
    box-sizing: border-box;
  }
  body {
    margin: 0;
    overflow: hidden;
    background: #f0f0f0;
    color: #000;
    font: 12px/16px "Open Sans", "Noto Sans CJK SC", sans-serif;
  }
  button, input, select {
    margin: 0;
    padding: 0;
    border: 0;
    background: none;
    color: inherit;
    font: inherit;
  }
  svg {
    display: block;
    flex: none;
  }
  ul {
    margin: 0;
    padding: 0;
    list-style: none;
  }
`;

const Desktop = styled.div`
  position: relative;
  display: flex;
  flex-direction: column;
  height: 100vh;
`;

const TitleBar = styled.header`
  display: flex;
  align-items: center;
  gap: 5px;
  height: 24px;
  padding: 0 2px;
  background: #fff;
`;

const Title = styled.h1`
  flex: 1;
  margin: 0;
  font-family: Inter, "Noto Sans CJK SC", sans-serif;
  font-size: 12px;
  font-weight: 400;
  white-space: nowrap;
`;

const WinButtons = styled.div`
  display: flex;
  button {
    display: grid;
    place-items: center;
    width: 46px;
    height: 20px;
  }
`;

const ImeBar = styled.div`
  position: absolute;
  top: 3px;
  left: 708px;
  display: flex;
  align-items: center;
  gap: 7px;
  width: 200px;
  height: 24px;
  border: 1px solid #b4c8dc;
  background: #fff;
  color: #1f74c8;
  font-size: 14px;
  svg:first-child {
    margin-left: -10px;
  }
`;

const SpeedBall = styled.div`
  position: absolute;
  top: -29px;
  left: 963px;
  display: flex;
  align-items: flex-end;
  justify-content: center;
  width: 48px;
  height: 48px;
  padding-bottom: 4px;
  border: 2px solid #d8d8d8;
  border-radius: 50%;
  background: #36bd58;
  box-shadow: 0 2px 6px rgba(0, 0, 0, 0.4);
  color: #fff;
  font-weight: 700;
  line-height: 12px;
  z-index: 1;
`;

const MenuRow = styled.div`
  display: flex;
  gap: 2px;
  height: 29px;
  white-space: nowrap;
`;

const ToolRow = styled(MenuRow)`
  gap: 3px;
`;

const Strip = styled.div`
  display: flex;
  align-items: center;
  min-width: 0;
  padding: 0 1px 0 2px;
  flex: ${({$basis, $grow}) => $grow ? '1 1 0' : $basis ? `0 1 ${$basis}px` : 'none'};
  background: ${({$lift}) => $lift ? 'linear-gradient(#fcfcfc, #f2f2f2)' : 'none'};
  white-space: nowrap;
`;

const Menus = styled.div`
  display: flex;
  gap: 1px;
  margin-right: 4px;
`;

const MenuItem = styled.button`
  padding: 0 5px;
`;

const Notice = styled.a`
  margin: auto;
  color: #663300;
  text-decoration: none;
`;

const Beans = styled.span`
  padding: 0 4px;
`;

const More = styled.span`
  align-self: flex-start;
  margin-left: auto;
  padding: 0 5px;
  font-size: 14px;
  font-weight: 700;
`;

const Tool = styled.button`
  display: flex;
  align-items: center;
  gap: 3px;
  height: 23px;
  padding: 0 3px;
  border: 1px solid ${({$on}) => $on ? '#0078d7' : 'transparent'};
  background: ${({$on}) => $on ? '#dceaf6' : 'none'};
  &:disabled {
    color: #838383;
  }
`;

const Drop = styled.span`
  display: grid;
  place-items: center;
  width: 9px;
`;

const Divider = styled.i`
  flex: none;
  width: 1px;
  height: 16px;
  margin: 0 2px;
  background: #b8b8b8;
`;

const Grip = styled.i`
  flex: none;
  width: 3px;
  height: 15px;
  margin: 0 2px;
  background: repeating-linear-gradient(#b8b8b8 0 2px, transparent 2px 4px);
`;

const Combos = styled.div`
  display: flex;
  gap: 4px;
  margin-right: 3px;
`;

const ComboBox = styled.div`
  position: relative;
  display: flex;
  align-items: center;
  gap: 2px;
  width: ${({$width}) => $width}px;
  height: 23px;
  padding-left: 2px;
  background: #fff;
  select {
    flex: 1;
    min-width: 0;
    appearance: none;
    outline: 0;
  }
`;

const ComboArrow = styled.span`
  position: absolute;
  top: 0;
  right: 0;
  bottom: 0;
  display: grid;
  place-items: center;
  width: 11px;
  background: #f7f7f7;
  pointer-events: none;
`;

const SlimSelect = styled(ComboBox)`
  width: 56px;
  margin: 0 3px;
  border: 1px solid #7a7a7a;
  background: #f4f4f4;
`;

const Body = styled.div`
  display: flex;
  flex: 1;
  gap: 4px;
  min-height: 0;
  padding: 2px 1px 0 0;
`;

const Side = styled.aside`
  display: flex;
  flex-direction: column;
  gap: 1px;
  width: 166px;
  padding-bottom: 3px;
  font-family: "Noto Sans CJK SC", sans-serif;
`;

const SideHead = styled.div`
  display: flex;
  align-items: center;
  justify-content: space-between;
  height: 16px;
  padding-right: 5px;
  background: #0054e3;
  color: #fff;
  line-height: 15px;
`;

const SideButton = styled.button`
  flex: none;
  height: 21px;
  margin-right: 1px;
  border: 1px solid #a0a0a0;
  border-top-color: #fff;
  background: #f0f0f0;
  line-height: 16px;
`;

const TreeTools = styled.div`
  display: flex;
  align-items: center;
  height: 27px;
  margin-right: 1px;
  padding-left: 7px;
  border: 1px solid #a0a0a0;
  border-bottom: 0;
  background: linear-gradient(#fcfcfc, #f2f2f2);
`;

const TreeBox = styled.div`
  display: flex;
  flex: 1;
  min-height: 0;
  margin: 0 2px;
  border: 1px solid #828790;
  background: #fff;
`;

const TreeList = styled.ul`
  flex: 1;
  min-width: 0;
  overflow: hidden;
  padding-left: 5px;
  white-space: nowrap;
`;

const Branch = styled.div`
  display: flex;
  align-items: center;
  gap: 5px;
  height: 16px;
`;

const Kids = styled.ul`
  margin-left: 7px;
  padding-left: 18px;
  border-left: 1px dotted #808080;
  li {
    display: flex;
    align-items: center;
    height: 16px;
    border-left: 1px dotted #808080;
  }
  li::before {
    content: "";
    width: 10px;
    border-top: 1px dotted #808080;
  }
`;

const Leaf = styled.button`
  display: flex;
  align-items: center;
  gap: 5px;
  height: 16px;
  padding-right: 4px;
  background: ${({$on}) => $on ? '#d9d9d9' : 'none'};
`;

const Half = styled.span`
  font: 10px "DejaVu Sans Mono", monospace;
  white-space: pre;
`;

const ScrollTrack = styled.div`
  display: flex;
  flex-direction: column;
  width: 15px;
  margin-right: 2px;
  background: #f0f0f0;
`;

const ScrollThumb = styled.div`
  flex: 0 1 84%;
  min-height: 0;
  margin-bottom: auto;
  background: #cdcdcd;
`;

const Work = styled.main`
  display: flex;
  flex: 1;
  flex-direction: column;
  min-width: 0;
`;

const Bars = styled.div`
  display: grid;
  grid-template-rows: 26px 27px 29px;
  row-gap: 1px;
`;

const BarRow = styled.div`
  display: flex;
  gap: 2px;
`;

const Viewport = styled.div`
  flex: 1;
  min-height: 0;
  background: #000;
`;

const SceneSvg = styled.svg`
  width: 100%;
  height: 100%;
  font-family: Roboto, sans-serif;
`;

const SnapRow = styled.div`
  display: flex;
  gap: 1px;
  height: 32px;
  padding: 0 0 2px;
`;

const Field = styled.span`
  display: flex;
  align-items: center;
  gap: 2px;
  padding: 0 2px 0 1px;
  color: #6d6d6d;
  font-size: 13px;
`;

const SpinBox = styled.span`
  display: flex;
  width: ${({$width}) => $width}px;
  height: 23px;
  border: 1px solid #7a7a7a;
  background: #f4f4f4;
  font-size: 12px;
  input {
    flex: 1;
    min-width: 0;
    text-align: right;
  }
`;

const SpinArrows = styled.span`
  display: flex;
  flex-direction: column;
  align-items: center;
  justify-content: space-between;
  width: 17px;
  padding: 4px 0;
`;

const Turn = styled.label`
  display: flex;
  align-items: center;
  gap: 8px;
  padding-right: 2px;
  input {
    width: 12px;
    height: 12px;
    border: 1px solid #8a8a8a;
    appearance: none;
  }
`;

const StatusBar = styled.footer`
  display: grid;
  grid-template-columns: 148px 78px 98px 48px 1fr 70px;
  gap: 2px;
  height: 21px;
  background: #fff;
  font-family: "Noto Sans CJK SC", sans-serif;
  div {
    padding-left: 1px;
    border: 1px solid #d4d4d4;
    background: linear-gradient(#fdfdfd, #f0f0f0);
    line-height: 18px;
    white-space: nowrap;
  }
`;

const TaskBar = styled.div`
  display: flex;
  flex: none;
  height: 40px;
  background: #020b0f;
  color: #fff;
`;

const Start = styled.button`
  display: grid;
  place-items: center;
  width: 48px;
  background: #000;
`;

const Search = styled.label`
  display: flex;
  align-items: center;
  gap: 6px;
  width: 344px;
  padding: 0 15px 0 8px;
  background: #333;
  font-size: 14px;
  input {
    flex: 1;
    min-width: 0;
  }
  input::placeholder {
    color: #9a9a9a;
    opacity: 1;
  }
`;

const Apps = styled.div`
  display: flex;
  margin-right: 4px;
  button {
    display: grid;
    place-items: center;
    width: ${({$cell}) => $cell}px;
  }
`;

const AppOpen = styled.button`
  border-bottom: 2px solid #76b9ed;
  border-top: 2px solid transparent;
  background: ${({$active}) => $active ? '#333d41' : 'none'};
`;

const Tray = styled.div`
  display: flex;
  align-items: center;
  gap: 11px;
  margin-left: auto;
  padding-right: 4px;
`;

const Stack = styled.span`
  padding: 0 6px;
  line-height: 18px;
  text-align: center;
`;

const Bell = styled.button`
  position: relative;
  display: grid;
  place-items: center;
  align-self: stretch;
  width: 48px;
  margin-left: -8px;
  border-right: 1px solid #444;
  b {
    position: absolute;
    right: 14px;
    bottom: 6px;
  }
`;

export default App;
